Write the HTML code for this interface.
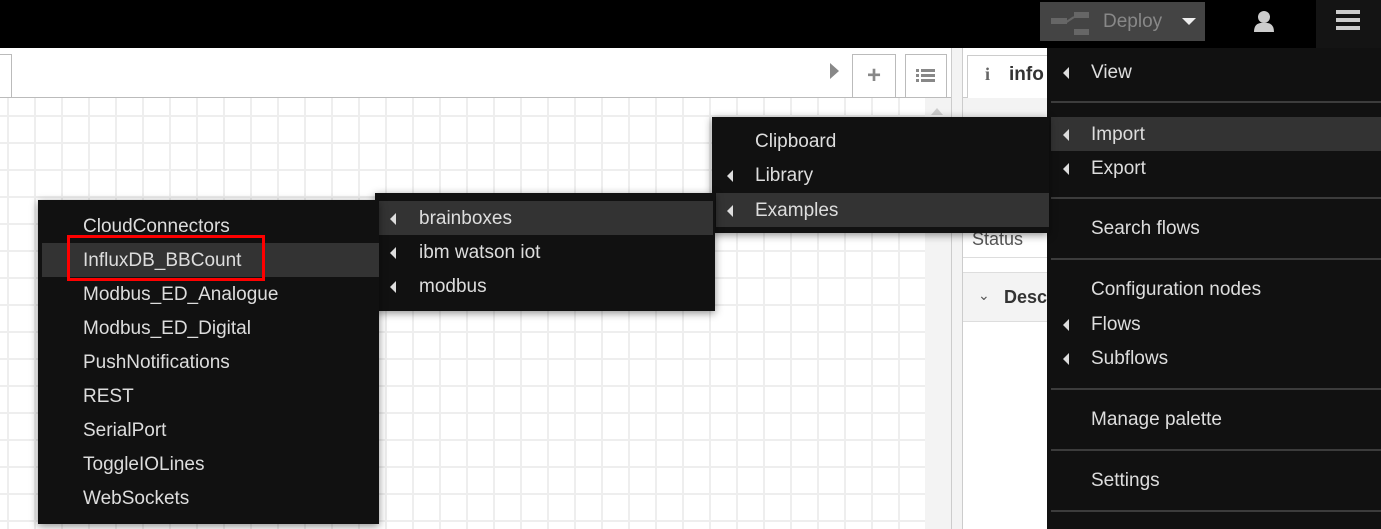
<!DOCTYPE html>
<html><head><meta charset="utf-8"><style>
*{margin:0;padding:0;box-sizing:border-box}
body{width:1381px;height:529px;overflow:hidden;position:relative;background:#fff;font-family:"Liberation Sans",Arial,sans-serif;}
.abs{position:absolute}
#hdr{left:0;top:0;width:1381px;height:48px;background:#000}
#grid{left:0;top:98px;width:925px;height:431px;background-color:#fff;
background-image:linear-gradient(90deg,#eee 2px,transparent 2px),linear-gradient(#eee 2px,transparent 2px);
background-size:27px 27px;background-position:7px 17px}
.menu{position:absolute;background:#111;box-shadow:0 2px 8px rgba(0,0,0,.45);color:#ddd;font-size:19px}
.it{position:absolute;left:4px;right:0;height:34px;line-height:36px}
.hl{background:#333}
.car{position:absolute;width:0;height:0;border-top:6px solid transparent;border-bottom:6px solid transparent;border-right:6px solid #ddd;top:12px}
.sep{position:absolute;left:4px;right:0;height:2px;background:#3c3c3c}
</style></head><body>
<div class="abs" id="hdr"></div>
<div class="abs" style="left:1040px;top:2px;width:165px;height:39px;background:#444"></div>
<div class="abs" style="left:1051px;top:18px;width:16px;height:6px;background:#666"></div>
<div class="abs" style="left:1074px;top:12px;width:15px;height:6px;background:#666"></div>
<div class="abs" style="left:1074px;top:29px;width:15px;height:6px;background:#666"></div>
<svg class="abs" style="left:1064px;top:14px" width="12" height="12"><path d="M1 9 L10 3" stroke="#666" stroke-width="2"/></svg>
<div class="abs" style="left:1103px;top:11px;font-size:19px;color:#888">Deploy</div>
<div class="abs" style="left:1182px;top:18px;border-left:7px solid transparent;border-right:7px solid transparent;border-top:7px solid #eee"></div>
<svg class="abs" style="left:1252px;top:8px" width="24" height="26"><circle cx="12" cy="9" r="6" fill="#ccc"/><path d="M2 24 Q2 14 12 15 Q22 14 22 24 Z" fill="#ccc"/></svg>
<div class="abs" style="left:1316px;top:0;width:65px;height:48px;background:#141414"></div>
<div class="abs" style="left:1336px;top:10px;width:24px;height:4px;background:#ccc"></div>
<div class="abs" style="left:1336px;top:18px;width:24px;height:4px;background:#ccc"></div>
<div class="abs" style="left:1336px;top:26px;width:24px;height:4px;background:#ccc"></div>
<div class="abs" style="left:0;top:48px;width:952px;height:50px;background:#fff;border-bottom:1px solid #bbb"></div>
<div class="abs" style="left:0;top:54px;width:12px;height:44px;border:1px solid #bbb;border-left:none;border-bottom:none"></div>
<div class="abs" style="left:830px;top:63px;border-top:8px solid transparent;border-bottom:8px solid transparent;border-left:9px solid #888"></div>
<div class="abs" style="left:852px;top:54px;width:44px;height:44px;border:1px solid #bbb;border-bottom:none;text-align:center;line-height:42px;font-size:24px;font-weight:bold;color:#888">+</div>
<div class="abs" style="left:905px;top:54px;width:42px;height:44px;border:1px solid #bbb;border-bottom:none"></div>
<svg class="abs" style="left:916px;top:68px" width="20" height="16"><g fill="#888"><rect x="0" y="1" width="3" height="3"/><rect x="5" y="1" width="14" height="3"/><rect x="0" y="6" width="3" height="3"/><rect x="5" y="6" width="14" height="3"/><rect x="0" y="11" width="3" height="3"/><rect x="5" y="11" width="14" height="3"/></g></svg>
<div class="abs" id="grid"></div>
<div class="abs" style="left:925px;top:98px;width:27px;height:431px;background:#f3f3f3"></div>
<div class="abs" style="left:931px;top:108px;border-left:6px solid transparent;border-right:6px solid transparent;border-bottom:7px solid #ccc"></div>
<div class="abs" style="left:955px;top:440px;width:4px;height:70px;background:#ccc"></div>
<div class="abs" style="left:951px;top:48px;width:1px;height:481px;background:#ccc"></div>
<div class="abs" style="left:952px;top:48px;width:10px;height:481px;background:#f3f3f3"></div>
<div class="abs" style="left:962px;top:48px;width:1px;height:481px;background:#ccc"></div>
<div class="abs" style="left:963px;top:98px;width:85px;height:431px;background:#fff"></div>
<div class="abs" style="left:963px;top:97px;width:85px;height:1px;background:#ccc"></div>
<div class="abs" style="left:967px;top:55px;width:85px;height:43px;border:1px solid #ccc;border-bottom:none;background:#fff"></div>
<div class="abs" style="left:985px;top:64px;font-size:18px;font-weight:bold;color:#666;font-family:'Liberation Serif',serif">i</div>
<div class="abs" style="left:1009px;top:64px;font-size:19px;font-weight:bold;color:#333">info</div>
<div class="abs" style="left:963px;top:98px;width:85px;height:120px;background:#f3f3f3"></div>
<div class="abs" style="left:972px;top:229px;font-size:18px;color:#555">Status</div>
<div class="abs" style="left:963px;top:257px;width:85px;height:1px;background:#ddd"></div>
<div class="abs" style="left:963px;top:272px;width:85px;height:50px;background:#f3f3f3;border-top:1px solid #ddd;border-bottom:1px solid #ddd"></div>
<div class="abs" style="left:978px;top:287px;font-size:14px;color:#555">&#8964;</div>
<div class="abs" style="left:1004px;top:287px;font-size:18px;font-weight:bold;color:#333">Desc</div>

<div class="menu" style="left:1047px;top:48px;width:334px;height:481px;box-shadow:none">
 <div class="it" style="top:7px"><span class="car" style="left:12px"></span><span style="position:absolute;left:40px">View</span></div>
 <div class="sep" style="top:53px"></div>
 <div class="it hl" style="top:69px"><span class="car" style="left:12px"></span><span style="position:absolute;left:40px">Import</span></div>
 <div class="it" style="top:103px"><span class="car" style="left:12px"></span><span style="position:absolute;left:40px">Export</span></div>
 <div class="sep" style="top:149px"></div>
 <div class="it" style="top:163px"><span style="position:absolute;left:40px">Search flows</span></div>
 <div class="sep" style="top:210px"></div>
 <div class="it" style="top:224px"><span style="position:absolute;left:40px">Configuration nodes</span></div>
 <div class="it" style="top:259px"><span class="car" style="left:12px"></span><span style="position:absolute;left:40px">Flows</span></div>
 <div class="it" style="top:293px"><span class="car" style="left:12px"></span><span style="position:absolute;left:40px">Subflows</span></div>
 <div class="sep" style="top:340px"></div>
 <div class="it" style="top:354px"><span style="position:absolute;left:40px">Manage palette</span></div>
 <div class="sep" style="top:401px"></div>
 <div class="it" style="top:415px"><span style="position:absolute;left:40px">Settings</span></div>
 <div class="sep" style="top:462px"></div>
</div>
<div class="menu" style="left:712px;top:117px;width:337px;height:116px">
 <div class="it" style="top:7px"><span style="position:absolute;left:39px">Clipboard</span></div>
 <div class="it" style="top:41px"><span class="car" style="left:11px"></span><span style="position:absolute;left:39px">Library</span></div>
 <div class="it hl" style="top:76px"><span class="car" style="left:11px"></span><span style="position:absolute;left:39px">Examples</span></div>
</div>
<div class="menu" style="left:375px;top:193px;width:340px;height:118px">
 <div class="it hl" style="top:8px;right:2px"><span class="car" style="left:11px"></span><span style="position:absolute;left:40px">brainboxes</span></div>
 <div class="it" style="top:42px"><span class="car" style="left:11px"></span><span style="position:absolute;left:40px">ibm watson iot</span></div>
 <div class="it" style="top:76px"><span class="car" style="left:11px"></span><span style="position:absolute;left:40px">modbus</span></div>
</div>
<div class="menu" style="left:38px;top:200px;width:341px;height:324px">
 <div class="it" style="top:9px"><span style="position:absolute;left:41px">CloudConnectors</span></div>
 <div class="it hl" style="top:43px"><span style="position:absolute;left:41px">InfluxDB_BBCount</span></div>
 <div class="it" style="top:77px"><span style="position:absolute;left:41px">Modbus_ED_Analogue</span></div>
 <div class="it" style="top:111px"><span style="position:absolute;left:41px">Modbus_ED_Digital</span></div>
 <div class="it" style="top:145px"><span style="position:absolute;left:41px">PushNotifications</span></div>
 <div class="it" style="top:179px"><span style="position:absolute;left:41px">REST</span></div>
 <div class="it" style="top:213px"><span style="position:absolute;left:41px">SerialPort</span></div>
 <div class="it" style="top:247px"><span style="position:absolute;left:41px">ToggleIOLines</span></div>
 <div class="it" style="top:281px"><span style="position:absolute;left:41px">WebSockets</span></div>
</div>
<div class="abs" style="left:67px;top:235px;width:198px;height:46px;border:3px solid #f00"></div>
</body></html>
